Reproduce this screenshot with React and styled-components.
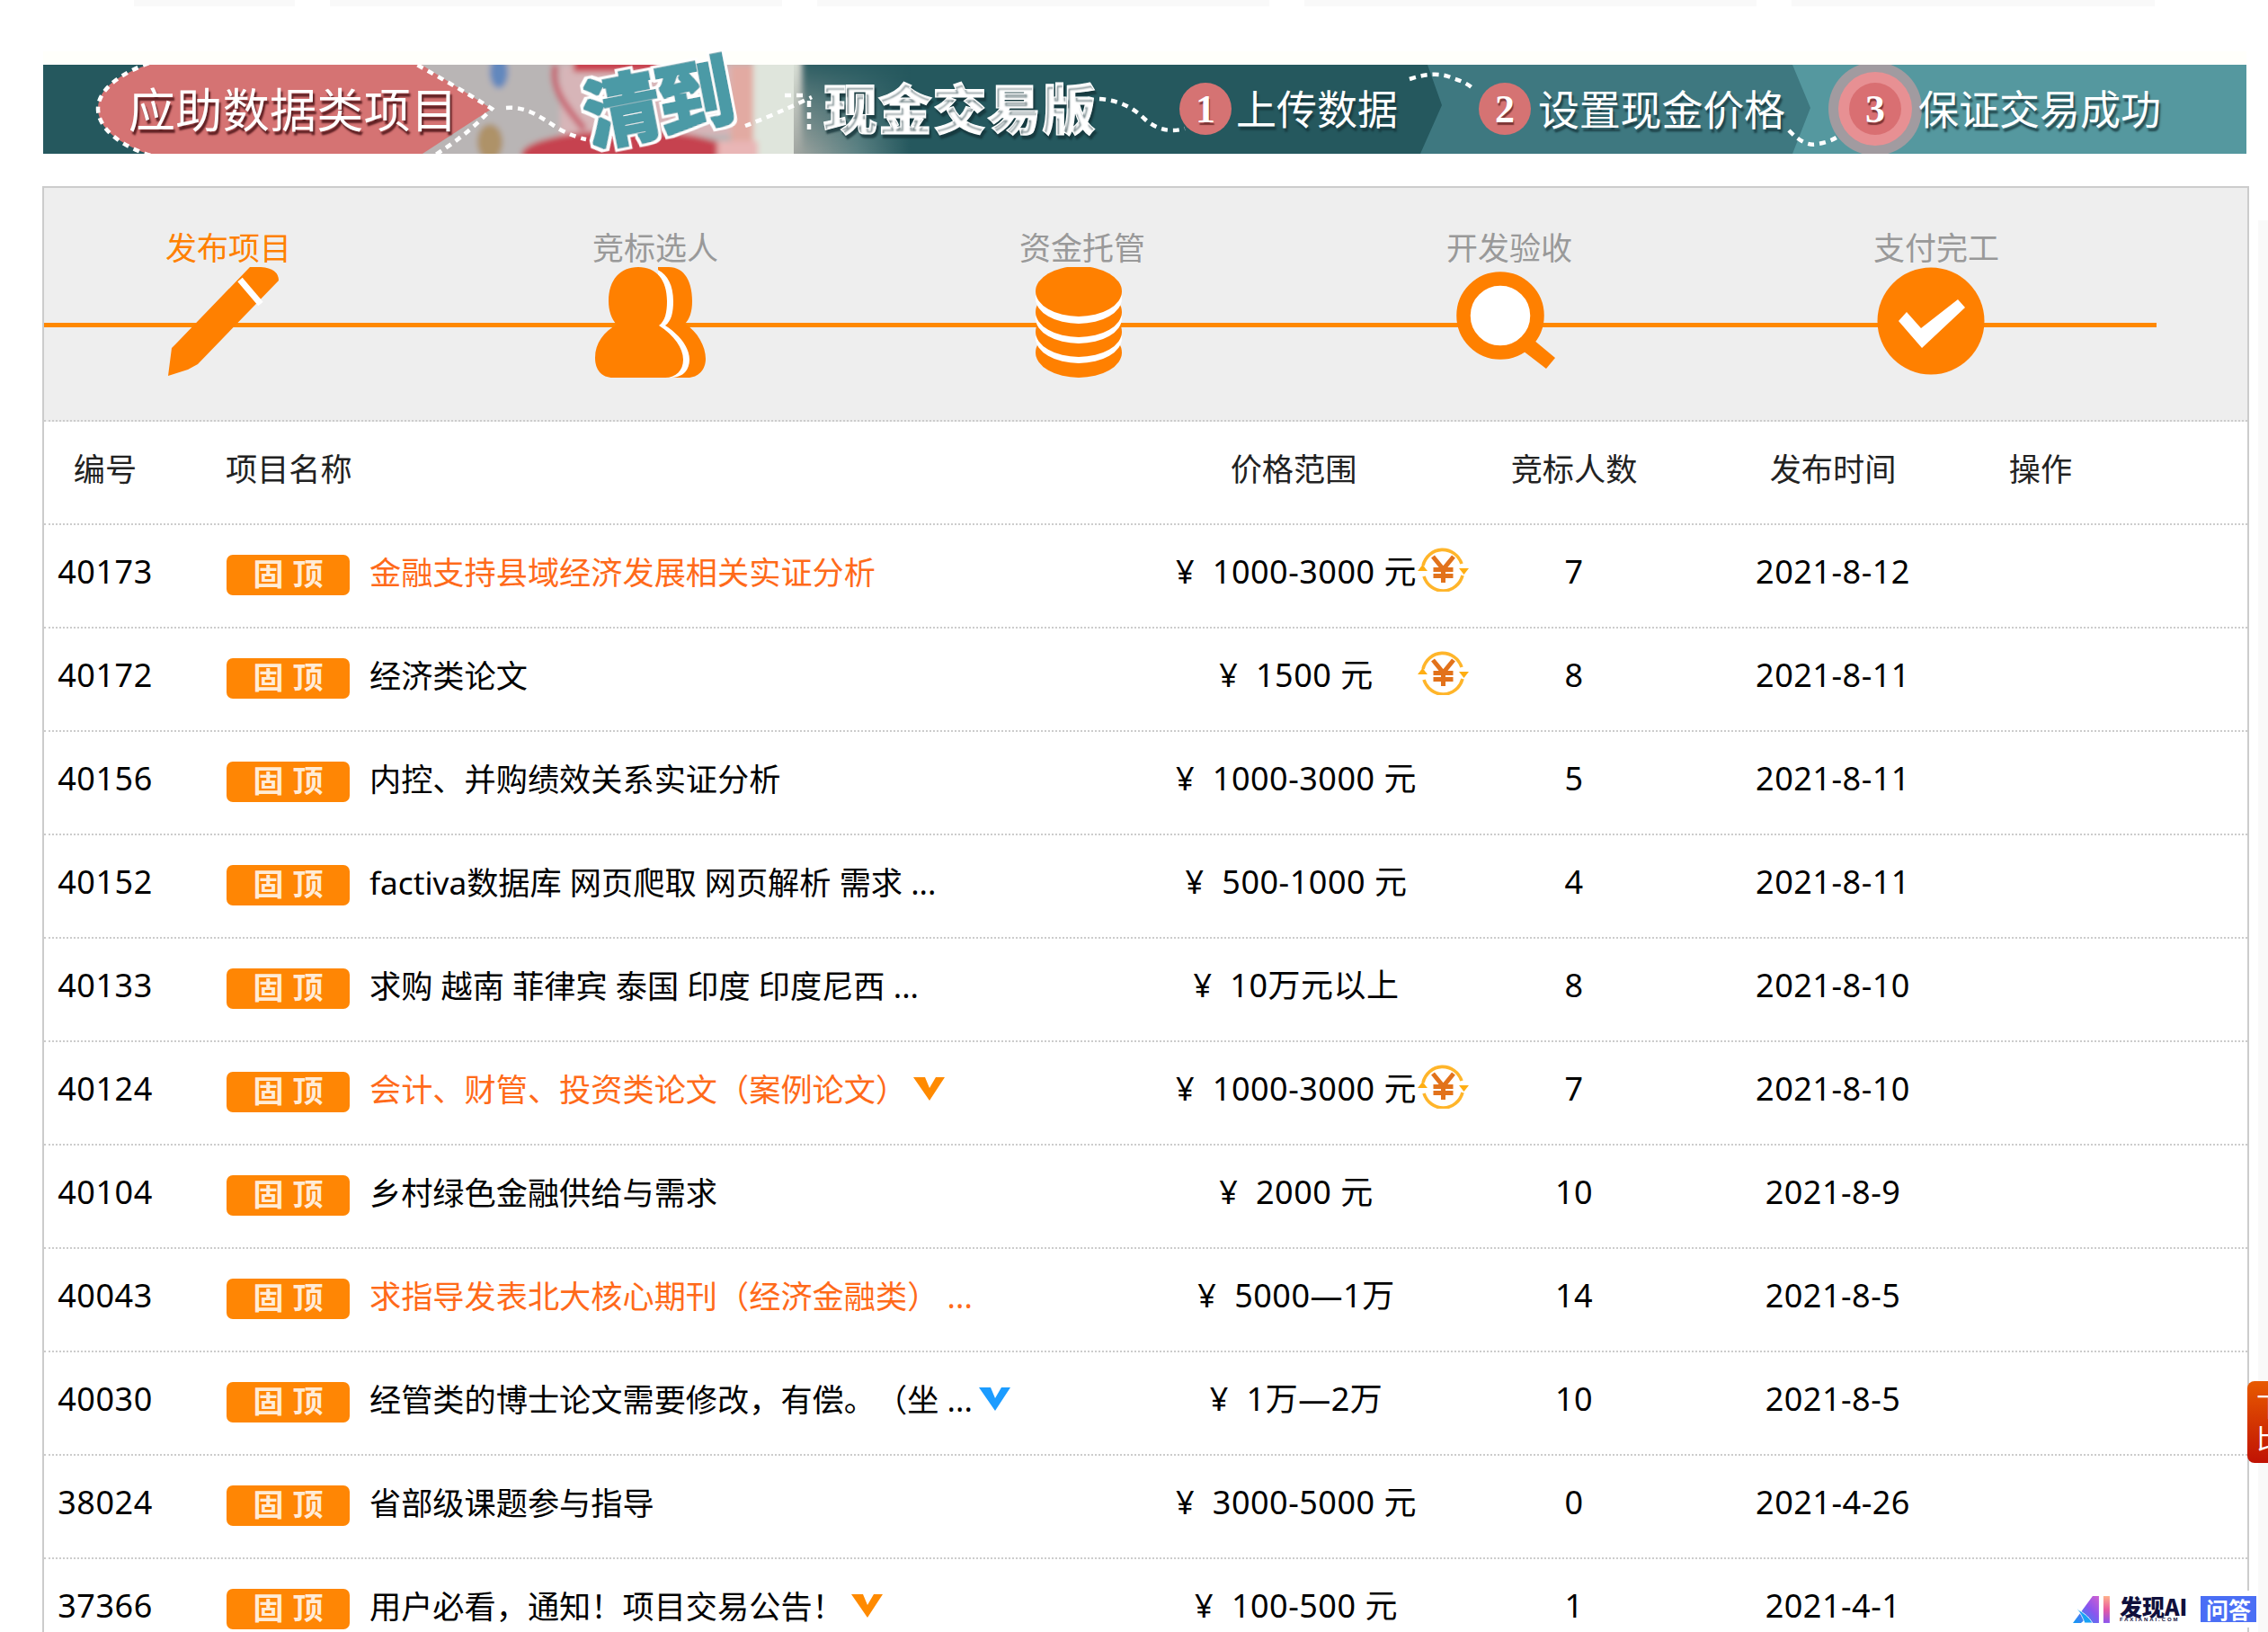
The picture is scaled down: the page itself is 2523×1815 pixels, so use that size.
import React from "react";
import styled, { createGlobalStyle } from "styled-components";

const FONT = `"Noto Sans", "Noto Sans CJK SC", sans-serif`;
const CJK = `"Noto Sans CJK SC", "Noto Sans", sans-serif`;

const Global = createGlobalStyle`
  html, body { margin: 0; padding: 0; background: #fff; }
  body { width: 2523px; height: 1815px; overflow: hidden; font-family: ${FONT}; text-spacing-trim: space-all; }
`;

const Page = styled.div`
  position: relative;
  width: 2523px;
  height: 1815px;
  overflow: hidden;
  background: #fff;
`;

const TopStrip = styled.div`
  display: flex;
  gap: 39px;
  height: 7px;
  padding-left: 149px;
`;
const StripTab = styled.div`
  width: ${(p) => p.$w}px;
  background: #f9f9f9;
`;

const BannerSvg = styled.svg`
  display: block;
  width: 2451px;
  height: 114px;
  margin: 50px 0 0 48px;
  overflow: visible;
`;
const BannerText = styled.text`
  font-family: ${CJK};
  font-size: ${(p) => p.$size}px;
  font-weight: ${(p) => p.$weight || 400};
  fill: #fff;
  stroke: #fff;
  stroke-width: ${(p) => p.$fat || 0}px;
  text-shadow: 2px 4px 2px ${(p) => p.$shadow || "rgba(20,50,55,.75)"};
`;
const BannerNum = styled.text`
  font-family: "Liberation Serif", serif;
  font-weight: 700;
  font-size: 44px;
  fill: #fff;
  text-anchor: middle;
  text-shadow: 1px 3px 1px rgba(90,30,30,.7);
`;
const StampText = styled.text`
  font-family: ${CJK};
  font-weight: 900;
  font-size: 86px;
  fill: #4b9aa6;
`;

const Panel = styled.section`
  box-sizing: border-box;
  width: 2455px;
  margin: 36px 0 0 47px;
  border: 2px solid #ccc;
  border-bottom: 0;
`;

const StepBar = styled.div`
  position: relative;
  box-sizing: border-box;
  height: 260px;
  display: flex;
  padding: 44px 0 0 137px;
  background: #eee;
  border-bottom: 2px dotted #ccc;
  &::before {
    content: "";
    position: absolute;
    left: 0;
    top: 150px;
    width: 2350px;
    height: 5px;
    background: #ff8800;
  }
`;
const Step = styled.div`
  position: relative;
  flex: none;
  width: 475px;
`;
const StepLabel = styled.div`
  font-family: ${CJK};
  font-size: 35px;
  line-height: 41px;
  height: 44px;
  margin-left: -2px;
  color: ${(p) => (p.$active ? "#ff8000" : "#999")};
`;
const StepIcon = styled.svg`
  display: block;
  margin-left: ${(p) => p.$x}px;
  margin-top: ${(p) => p.$y || 0}px;
`;

const Row = styled.div`
  box-sizing: border-box;
  height: 115px;
  display: grid;
  grid-template-columns: 136px 1120px 274px 344px 232px 230px 1fr;
  align-items: center;
  border-bottom: 2px dotted #ccc;
  font-family: ${FONT};
  font-size: ${(p) => (p.$head ? "35.2px" : "36px")};
  letter-spacing: ${(p) => (p.$head ? "0" : "0.5px")};
  line-height: 48px;
  color: ${(p) => (p.$head ? "#222" : "#000")};
  white-space: pre;
`;
const Cell = styled.div`
  position: relative;
  text-align: center;
  padding-bottom: 9px;
  padding-right: ${(p) => p.$nudge || 0}px;
`;
const NameCell = styled.div`
  display: flex;
  align-items: center;
  padding: 0 0 10px 66px;
  font-size: 35.2px;
  letter-spacing: 0;
`;
const Badge = styled.span`
  flex: none;
  width: 137px;
  height: 45px;
  margin: 8px 22px 0 1px;
  padding-bottom: 5px;
  box-sizing: border-box;
  display: flex;
  align-items: center;
  justify-content: center;
  border-radius: 7px;
  background: #ff8604;
  color: rgba(255, 255, 255, 0.85);
  font-family: ${CJK};
  font-weight: 700;
  font-size: 34px;
  line-height: 40px;
  letter-spacing: 10px;
  text-indent: 10px;
`;
const Title = styled.span`
  color: ${(p) => (p.$hot ? "#ff6a1a" : "#000")};
`;
const VSvg = styled.svg`
  flex: none;
  margin-left: ${(p) => p.$gap}px;
  margin-top: 1px;
`;
const YenSvg = styled.svg`
  position: absolute;
  left: 272px;
  top: -4px;
`;

const SideStrip = styled.div`
  position: absolute;
  left: 2512px;
  top: 245px;
  bottom: 0;
  width: 11px;
  background: #f9f9f9;
`;
const SideTab = styled.div`
  position: absolute;
  left: 2500px;
  top: 1536px;
  width: 23px;
  height: 91px;
  overflow: hidden;
  border-radius: 8px 0 0 8px;
  background: linear-gradient(180deg, #e85a00, #c01204);
  color: #fff;
  font-family: ${CJK};
  font-size: 30px;
  line-height: 36px;
  padding: 8px 0 0 10px;
  box-sizing: border-box;
  white-space: pre-line;
`;
const Mark = styled.div`
  position: absolute;
  left: 2296px;
  top: 1769px;
  width: 214px;
  height: 41px;
  background: #fff;
  display: flex;
  align-items: center;
  padding-left: 10px;
  box-sizing: border-box;
`;
const MarkWord = styled.div`
  display: flex;
  flex-direction: column;
  margin-left: 10px;
  color: #10103c;
  font-family: ${CJK};
  font-weight: 900;
  font-size: 25px;
  line-height: 24px;
  white-space: nowrap;
`;
const MarkSub = styled.span`
  font-family: "Liberation Sans", sans-serif;
  font-weight: 700;
  font-size: 6px;
  line-height: 7px;
  letter-spacing: 1.9px;
`;
const MarkTag = styled.span`
  width: 62px;
  height: 29px;
  margin-left: 15px;
  background: #4a6ef5;
  color: #fff;
  font-family: ${CJK};
  font-weight: 700;
  font-size: 25px;
  line-height: 29px;
  text-align: center;
`;

const TEAL = "#25585e";

function Banner() {
  return (
    <BannerSvg viewBox="0 -15 2451 114">
      <defs>
        <linearGradient id="fade" x1="0" x2="1" y1="0" y2="0">
          <stop offset="0" stopColor="#a2a6a1" />
          <stop offset="0.55" stopColor="#5d8284" />
          <stop offset="1" stopColor={TEAL} />
        </linearGradient>
        <linearGradient id="mask" x1="0" x2="0" y1="0" y2="1">
          <stop offset="0" stopColor="#fff" stopOpacity="0.1" />
          <stop offset="0.45" stopColor="#fff" stopOpacity="0.55" />
          <stop offset="1" stopColor="#fff" />
        </linearGradient>
        <mask id="fadeMask"><rect x="835" y="0" width="130" height="99" fill="url(#mask)" /></mask>
        <filter id="soft"><feGaussianBlur stdDeviation="3" /></filter>
        <filter id="stamp" x="-20%" y="-20%" width="140%" height="140%">
          <feMorphology in="SourceGraphic" operator="dilate" radius="0.8" result="fat" />
          <feMorphology in="SourceAlpha" operator="dilate" radius="4.5" result="halo" />
          <feFlood floodColor="#fff" />
          <feComposite in2="halo" operator="in" result="white" />
          <feMerge>
            <feMergeNode in="white" />
            <feMergeNode in="fat" />
          </feMerge>
        </filter>
        <clipPath id="bannerClip"><rect x="0" y="0" width="2451" height="99" /></clipPath>
      </defs>
      <rect x="0" y="-15" width="2451" height="15" fill="#fffffb" />
      <g clipPath="url(#bannerClip)">
        <rect width="2451" height="99" fill={TEAL} />
        <path d="M1540 0 L1556 45 L1532 99 H2451 V0 Z" fill="#3e7880" />
        <path d="M1946 0 L1966 48 L1946 99 H2451 V0 Z" fill="#55989f" />
        <g filter="url(#soft)">
          <rect x="415" y="-10" width="430" height="120" fill="#b9b5b5" />
          <ellipse cx="507" cy="8" rx="10" ry="18" fill="#6288bd" />
          <ellipse cx="497" cy="86" rx="14" ry="20" fill="#ae9268" />
          <rect x="575" y="0" width="190" height="78" fill="#d7b5b8" />
          <path d="M570 0 C562 30 590 55 602 72" fill="none" stroke="#c8616e" strokeWidth="7" />
          <rect x="590" y="-6" width="120" height="14" fill="#c9404e" />
          <ellipse cx="650" cy="100" rx="118" ry="27" fill="#c6424f" />
          <rect x="765" y="0" width="26" height="110" fill="#e2aaa2" />
          <rect x="790" y="-10" width="52" height="120" fill="#dfe5dc" />
          <rect x="750" y="85" width="45" height="25" fill="#e9b6b6" />
        </g>
        <rect x="835" y="0" width="130" height="99" fill="url(#fade)" mask="url(#fadeMask)" />
        <path d="M155 -10 L405 -10 L499 49 L405 110 L155 110 C85 95 61 70 61 49 C61 25 85 5 155 -10 Z" fill="#d57373" />
        <path d="M130 -6 C85 8 61 28 61 49 C61 70 85 92 130 104 M405 -6 Q470 30 499 49 Q470 80 430 104 M515 48 C540 46 555 60 575 72 Q590 80 604 83 M781 68 Q815 55 855 36 M825 34 H850 M852 40 V72 M1175 38 Q1205 40 1225 60 Q1245 78 1270 71 M1520 16 Q1550 6 1568 15 Q1585 20 1592 28 M1942 73 Q1960 92 1974 88 Q1995 85 2006 71" fill="none" stroke="#fff" strokeWidth="4.5" strokeDasharray="7 6" />
        <circle cx="1293" cy="49" r="29" fill="#d57373" />
        <circle cx="1626" cy="49" r="29" fill="#d57373" />
        <circle cx="2038" cy="49" r="52" fill="#a19ba0" />
        <circle cx="2038" cy="49" r="41" fill="#e79093" />
        <circle cx="2038" cy="49" r="29" fill="#d96f72" />
      </g>
      <BannerText x="95" y="70" $size="52" $shadow="#5d1f22" textLength="366">应助数据类项目</BannerText>
      <StampText transform="translate(608 90) rotate(-11)" textLength="168" filter="url(#stamp)">清到</StampText>
      <BannerText x="868" y="72" $size="60" $weight="900" $fat="1.2" textLength="303">现金交易版</BannerText>
      <BannerNum x="1293" y="64">1</BannerNum>
      <BannerText x="1327" y="67" $size="45" textLength="180">上传数据</BannerText>
      <BannerNum x="1626" y="64">2</BannerNum>
      <BannerText x="1663" y="67" $size="46" textLength="275">设置现金价格</BannerText>
      <BannerNum x="2038" y="64">3</BannerNum>
      <BannerText x="2086" y="67" $size="45" textLength="270">保证交易成功</BannerText>
    </BannerSvg>
  );
}

const ORANGE = "#ff8000";

function PenIcon() {
  return (
    <StepIcon $x={1} width="123" height="122" viewBox="0 0 123 122">
      <path d="M0 121 L4 90 L10 84 L91 0 Q123 -2 123 15 L33 108 L22 114 Z" fill={ORANGE} />
      <path d="M80 14 L103 41" stroke="#fff" strokeWidth="7" fill="none" />
    </StepIcon>
  );
}
const FRONT = "M48 0 C68 0 80 14 80 38 C80 50 78 60 71 65 C88 76 98 90 98 103 C98 115 90 123 78 123 H20 C7 123 0 114 0 101 C0 84 10 72 24 64 C18 58 15 48 15 38 C15 14 28 0 48 0 Z";
const BACK = "M70 0 H82 C98 0 108 14 108 38 C108 50 105 58 100 63 C114 72 123 88 123 102 C123 114 115 123 103 123 H70 Z";
function PeopleIcon() {
  return (
    <StepIcon $x={1} width="123" height="123" viewBox="0 0 123 123">
      <defs><clipPath id="backPerson"><path d={BACK} /></clipPath></defs>
      <path d={BACK} fill={ORANGE} />
      <g clipPath="url(#backPerson)"><path d={FRONT} fill="#fff" transform="translate(7 0)" /></g>
      <path d={FRONT} fill={ORANGE} />
    </StepIcon>
  );
}
function CoinsIcon() {
  return (
    <StepIcon $x={16} width="97" height="123" viewBox="0 0 97 123">
      <ellipse cx="48" cy="95" rx="48" ry="28" fill={ORANGE} />
      <ellipse cx="48" cy="79" rx="48" ry="28" fill="#fff" />
      <ellipse cx="48" cy="72" rx="48" ry="28" fill={ORANGE} />
      <ellipse cx="48" cy="57" rx="48" ry="28" fill="#fff" />
      <ellipse cx="48" cy="50" rx="48" ry="28" fill={ORANGE} />
      <ellipse cx="48" cy="35" rx="48" ry="28" fill="#fff" />
      <ellipse cx="48" cy="27" rx="48" ry="28" fill={ORANGE} />
    </StepIcon>
  );
}
function LensIcon() {
  return (
    <StepIcon $x={9} $y={5} width="110" height="108" viewBox="0 0 110 108">
      <path d="M86 76 L110 96 L100 108 L74 88 Z" fill={ORANGE} />
      <circle cx="49" cy="49" r="41" fill="#fff" stroke={ORANGE} strokeWidth="15.5" />
    </StepIcon>
  );
}
function CheckIcon() {
  return (
    <StepIcon $x={2} width="120" height="120" viewBox="0 0 120 120">
      <circle cx="60" cy="60" r="59.5" fill={ORANGE} />
      <path d="M24 60 L33 50 L49 68 L90 36 L98 45 L50 90 Z" fill="#fff" />
    </StepIcon>
  );
}

function YenIcon() {
  return (
    <YenSvg width="57" height="50" viewBox="0 0 57 50">
      <path d="M6 21 A22.5 23.5 0 0 1 49 19" fill="none" stroke="#ffb52a" strokeWidth="3.6" />
      <path d="M7 33 A22.5 23.5 0 0 0 50 32" fill="none" stroke="#ffb52a" strokeWidth="3.6" />
      <path d="M0 27 H11 L5.5 20 Z" fill="#ffae12" />
      <path d="M46 24 H57 L51.5 31 Z" fill="#ffae12" />
      <path d="M17 11 L28.5 25 L40 11 M28.5 25 V40 M17.5 25.5 H39.5 M17.5 32.5 H39.5" fill="none" stroke="#e2721b" strokeWidth="5" />
    </YenSvg>
  );
}
function VIcon({ color, gap }) {
  return (
    <VSvg $gap={gap} width="35" height="26" viewBox="0 0 35 26">
      <path d="M0 0 H13 L18 12 L25 0 H35 L18 26 Z" fill={color} />
    </VSvg>
  );
}

const steps = ["发布项目", "竞标选人", "资金托管", "开发验收", "支付完工"];
const stepIcons = [PenIcon, PeopleIcon, CoinsIcon, LensIcon, CheckIcon];

const rows = [
  { id: "40173", t: "金融支持县域经济发展相关实证分析", hot: true, p: "¥  1000-3000 元", yen: true, n: "7", d: "2021-8-12" },
  { id: "40172", t: "经济类论文", p: "¥  1500 元", yen: true, n: "8", d: "2021-8-11" },
  { id: "40156", t: "内控、并购绩效关系实证分析", p: "¥  1000-3000 元", n: "5", d: "2021-8-11" },
  { id: "40152", t: "factiva数据库 网页爬取 网页解析 需求 ...", p: "¥  500-1000 元", n: "4", d: "2021-8-11" },
  { id: "40133", t: "求购 越南 菲律宾 泰国 印度 印度尼西 ...", p: "¥  10万元以上", n: "8", d: "2021-8-10" },
  { id: "40124", t: "会计、财管、投资类论文（案例论文）", hot: true, v: "#ff8a00", gap: 7, p: "¥  1000-3000 元", yen: true, n: "7", d: "2021-8-10" },
  { id: "40104", t: "乡村绿色金融供给与需求", p: "¥  2000 元", n: "10", d: "2021-8-9" },
  { id: "40043", t: "求指导发表北大核心期刊（经济金融类） ...", hot: true, p: "¥  5000—1万", n: "14", d: "2021-8-5" },
  { id: "40030", t: "经管类的博士论文需要修改，有偿。（坐 ...", v: "#1c9cff", gap: 7, p: "¥  1万—2万", n: "10", d: "2021-8-5" },
  { id: "38024", t: "省部级课题参与指导", p: "¥  3000-5000 元", n: "0", d: "2021-4-26" },
  { id: "37366", t: "用户必看，通知！项目交易公告！", v: "#ff8a00", gap: 8, p: "¥  100-500 元", n: "1", d: "2021-4-1" },
];

export default function App() {
  return (
    <Page>
      <Global />
      <TopStrip>
        {[179, 503, 503, 503, 404].map((w, i) => (
          <StripTab key={i} $w={w} />
        ))}
      </TopStrip>
      <Banner />
      <Panel>
        <StepBar>
          {steps.map((s, i) => {
            const Icon = stepIcons[i];
            return (
              <Step key={s}>
                <StepLabel $active={i === 0}>{s}</StepLabel>
                <Icon />
              </Step>
            );
          })}
        </StepBar>
        <Row $head>
          <Cell>编号</Cell>
          <NameCell>项目名称</NameCell>
          <Cell $nudge={6}>价格范围</Cell>
          <Cell>竞标人数</Cell>
          <Cell>发布时间</Cell>
          <Cell>操作</Cell>
        </Row>
        {rows.map((r) => (
          <Row key={r.id}>
            <Cell>{r.id}</Cell>
            <NameCell>
              <Badge>固顶</Badge>
              <Title $hot={r.hot}>{r.t}</Title>
              {r.v && <VIcon color={r.v} gap={r.gap} />}
            </NameCell>
            <Cell>
              {r.p}
              {r.yen && <YenIcon />}
            </Cell>
            <Cell>{r.n}</Cell>
            <Cell>{r.d}</Cell>
            <Cell />
          </Row>
        ))}
      </Panel>
      <SideStrip />
      <SideTab>{"下\n比"}</SideTab>
      <Mark>
        <svg width="42" height="30" viewBox="0 0 42 30">
          <defs>
            <linearGradient id="aiGrad" x1="0" x2="1" y1="1" y2="0">
              <stop offset="0" stopColor="#0c9cf5" />
              <stop offset="0.6" stopColor="#8b55ee" />
              <stop offset="1" stopColor="#d060d0" />
            </linearGradient>
            <linearGradient id="aiBar" x1="0" x2="0" y1="0" y2="1">
              <stop offset="0" stopColor="#ffb08a" />
              <stop offset="0.5" stopColor="#e85aa0" />
              <stop offset="1" stopColor="#8b55ee" />
            </linearGradient>
          </defs>
          <path d="M0 30 L22 0 H29 V30 H21 L17 23 L9 30 Z" fill="url(#aiGrad)" />
          <path d="M4 14 C11 18 18 23 22 30 H13 C11 24 8 18 4 14 Z" fill="#19a2f5" stroke="#fff" strokeWidth=".8" />
          <path d="M34 0 H41 V30 H34 Z" fill="url(#aiBar)" />
        </svg>
        <MarkWord>
          发现AI
          <MarkSub>FAXIANAI.COM</MarkSub>
        </MarkWord>
        <MarkTag>问答</MarkTag>
      </Mark>
    </Page>
  );
}
